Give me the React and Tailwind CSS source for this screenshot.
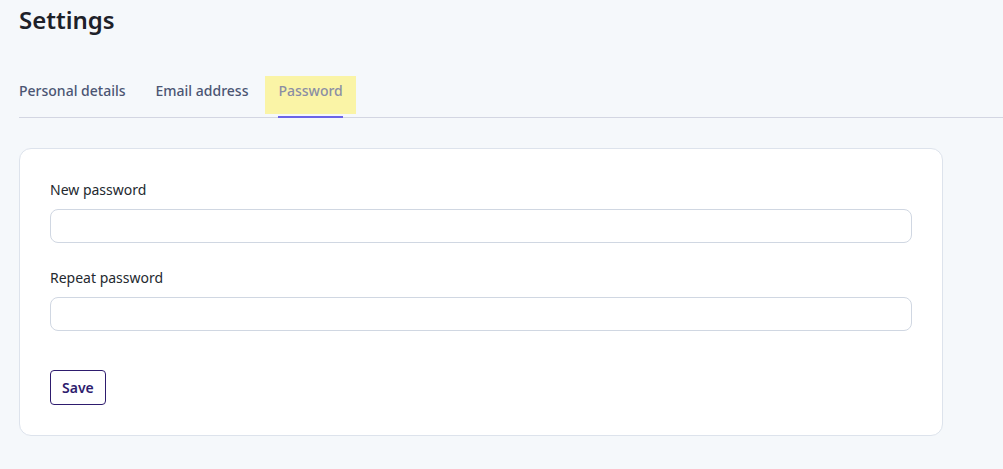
import React from "react";

const tabs = ["Personal details", "Email address", "Password"];

const Field = ({ label, className = "" }) => (
  <div className={className}>
    <label className="block text-[14px] leading-[20px] text-[#24292f]">{label}</label>
    <input
      type="password"
      className="mt-[9px] block w-full h-[34px] rounded-[8px] border border-[#d0d7e2] bg-white px-3 outline-none"
    />
  </div>
);

export default function App() {
  return (
    <div
      className="min-h-screen bg-[#f5f8fb] pl-[19px] pt-[4px] pb-8"
      style={{ fontFamily: '"Noto Sans", "Open Sans", sans-serif' }}
    >
      <h1 className="text-[24px] leading-[32px] font-semibold text-[#1d2129]">Settings</h1>

      {/* tabs */}
      <div className="mt-[40px] border-b border-[#d3d6e2]">
        <div className="flex -ml-[13px] gap-[4px]">
          {tabs.map((t) => {
            const active = t === "Password";
            return (
              <div
                key={t}
                className={`relative px-[13px] pt-[5px] pb-[16px] text-[14px] leading-[20px] font-medium ${
                  active ? "text-[#8a8ea4]" : "text-[#4b5573]"
                }`}
              >
                {active && (
                  <>
                    <span className="absolute left-0 right-0 top-0 h-[38px] bg-[#faf4a6]" />
                    <span className="absolute left-[13px] right-[13px] -bottom-px h-[2px] bg-[#6b63e8]" />
                  </>
                )}
                <span className="relative">{t}</span>
              </div>
            );
          })}
        </div>
      </div>

      {/* card */}
      <div className="mt-[30px] w-[924px] rounded-[12px] border border-[#dde3ec] bg-white px-[30px] pt-[31px] pb-[30px]">
        <Field label="New password" />
        <Field label="Repeat password" className="mt-[25px]" />
        <button className="mt-[39px] h-[35px] px-[11px] rounded-[4px] border border-[#2e1c6e] text-[14px] font-semibold text-[#2e1c6e] bg-white">
          Save
        </button>
      </div>
    </div>
  );
}
